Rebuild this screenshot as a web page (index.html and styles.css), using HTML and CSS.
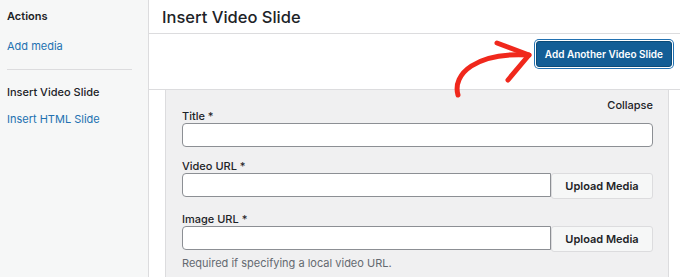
FILE: index.html
```html
<!DOCTYPE html>
<html lang="en">
<head>
  <meta charset="UTF-8">
  <title>Insert Video Slide</title>
  <link rel="stylesheet" href="styles.css">
</head>
<body>
  <div class="page">
    <aside class="sidebar">
      <div class="side-title">Actions</div>
      <a class="side-link" href="#">Add media</a>
      <hr class="side-divider">
      <div class="side-current">Insert Video Slide</div>
      <a class="side-link" href="#">Insert HTML Slide</a>
    </aside>
    <main class="main">
      <div class="main-header">
        <h1 class="main-title">Insert Video Slide</h1>
      </div>
      <div class="toolbar">
        <button class="btn-primary">Add Another Video Slide</button>
      </div>
      <div class="content">
        <div class="panel">
          <div class="panel-top"><span class="collapse">Collapse</span></div>
          <div class="field">
            <label class="field-label">Title *</label>
            <input class="text-input" type="text">
          </div>
          <div class="field">
            <label class="field-label">Video URL *</label>
            <div class="input-row">
              <input class="text-input" type="text">
              <button class="btn-secondary">Upload Media</button>
            </div>
          </div>
          <div class="field">
            <label class="field-label">Image URL *</label>
            <div class="input-row">
              <input class="text-input" type="text">
              <button class="btn-secondary">Upload Media</button>
            </div>
            <p class="help-text">Required if specifying a local video URL.</p>
          </div>
        </div>
      </div>
    </main>
  </div>

  <!-- hand drawn arrow pointing at the button -->
  <svg class="arrow" width="680" height="277" viewBox="0 0 680 277">
    <path d="M458 95 C 452 74, 476 52, 529 55" fill="none" stroke="#f0281c" stroke-width="5" stroke-linecap="round"/>
    <path d="M497 43 L529 55 L508 80" fill="none" stroke="#f0281c" stroke-width="5" stroke-linecap="round" stroke-linejoin="round"/>
  </svg>
</body>
</html>
```

FILE: styles.css
```css
body {
  margin: 0;
  font-family: Inter, "Noto Sans", sans-serif;
  color: #1d2327;
  background: #fff;
  overflow: hidden;
}
.page {
  display: flex;
  height: 277px;
}
.sidebar {
  width: 141px;
  flex: 0 0 141px;
  background: #f6f7f7;
  border-right: 1px solid #dcdcde;
  padding: 9px 0 0 7px;
  font-size: 11px;
  line-height: 14px;
}
.side-title {
  font-weight: 600;
}
.side-link {
  display: block;
  color: #2271b1;
  text-decoration: none;
  margin-top: 16px;
}
.side-divider {
  border: 0;
  border-top: 1px solid #dcdcde;
  margin: 16px 16px 0 0;
}
.side-current {
  margin-top: 15px;
  font-weight: 500;
}
.side-current + .side-link {
  margin-top: 13px;
}
.main {
  flex: 1;
  display: flex;
  flex-direction: column;
}
.main-header {
  flex: 0 0 34px;
  box-sizing: border-box;
  border-bottom: 1px solid #dcdcde;
  padding-left: 13px;
  display: flex;
  align-items: center;
}
.main-title {
  margin: 0;
  font-size: 16.5px;
  font-weight: 500;
}
.toolbar {
  flex: 0 0 56px;
  border-bottom: 1px solid #dcdcde;
  display: flex;
  justify-content: flex-end;
  align-items: flex-start;
  padding: 7px 8px 0 0;
  box-sizing: border-box;
}
.btn-primary {
  height: 26px;
  padding: 0 8px;
  background: #135e96;
  border: 1px solid #0a4b78;
  border-radius: 3px;
  color: #fff;
  font-family: inherit;
  font-size: 10px;
  font-weight: 600;
  box-shadow: 0 0 0 1px #fff, 0 0 0 2px #2271b1;
}
.content {
  flex: 1;
  padding: 0 11px 0 16px;
}
.panel {
  height: 100%;
  box-sizing: border-box;
  background: #f0f0f1;
  border-left: 1px solid #dcdcde;
  border-right: 1px solid #dcdcde;
  padding: 8px 15px 0 16px;
  font-size: 11px;
  line-height: 14px;
}
.panel-top {
  display: flex;
  justify-content: flex-end;
  height: 11px;
}
.collapse {
  font-weight: 500;
}
.field {
  margin-bottom: 12px;
}
.field + .field + .field {
  margin-top: 13px;
}
.field-label {
  display: block;
  font-weight: 500;
}
.text-input {
  display: block;
  width: 100%;
  height: 24px;
  box-sizing: border-box;
  border: 1px solid #8c8f94;
  border-radius: 4px;
  background: #fff;
  margin: 0;
}
.input-row {
  display: flex;
  align-items: flex-start;
}
.input-row .text-input {
  flex: 1;
  border-radius: 4px 0 0 4px;
}
.btn-secondary {
  width: 102px;
  flex: 0 0 102px;
  height: 26px;
  background: #f6f7f7;
  border: 1px solid #dcdcde;
  border-radius: 3px;
  color: #1d2327;
  font-family: inherit;
  font-size: 11px;
  font-weight: 600;
}
.help-text {
  margin: 4px 0 0;
  color: #646970;
}
.arrow {
  position: absolute;
  left: 0;
  top: 0;
  pointer-events: none;
}
```
